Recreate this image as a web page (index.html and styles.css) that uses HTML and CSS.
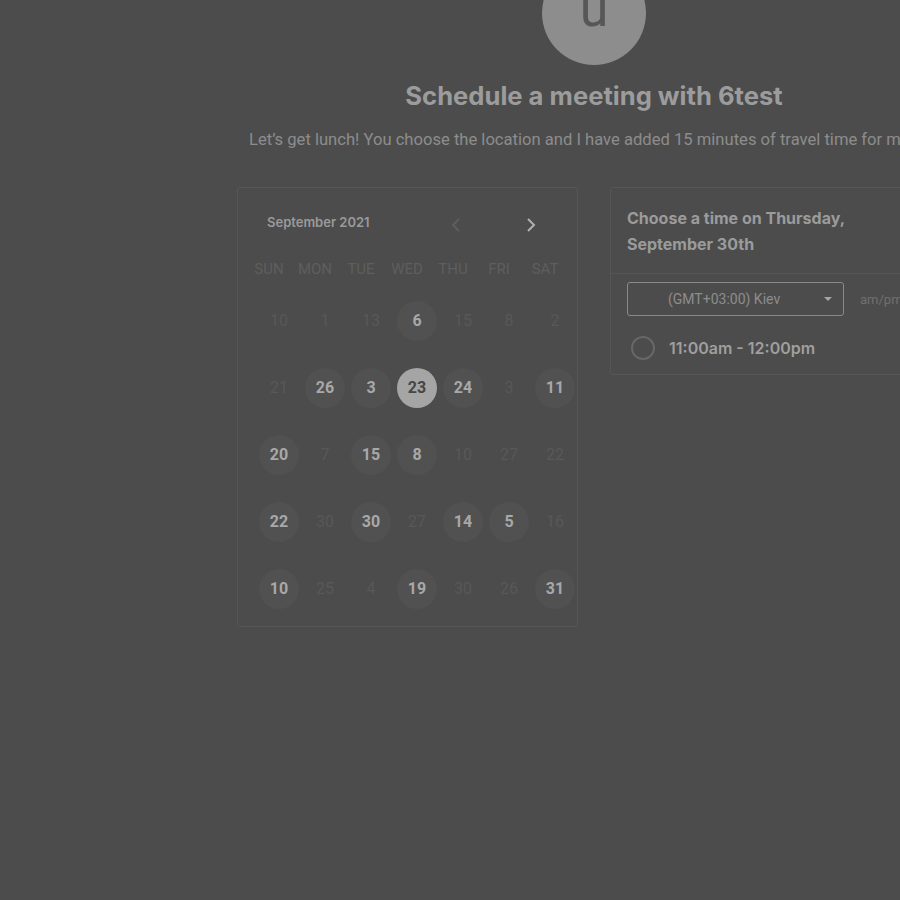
FILE: index.html
```html
<!DOCTYPE html>
<html>
<head>
<meta charset="utf-8">
<link rel="stylesheet" href="styles.css">
</head>
<body>
<div class="page">
  <div class="avatar">u</div>
  <h1 class="title">Schedule a meeting with 6test</h1>
  <p class="subtitle">Let’s get lunch! You choose the location and I have added 15 minutes of travel time for me.</p>
  <div class="cards">
    <section class="card calendar">
      <div class="cal-head">
        <span class="month">September 2021</span>
        <div class="nav">
          <svg class="chev prev" width="10" height="16" viewBox="0 0 10 16"><path d="M8 2 L2 8 L8 14" fill="none" stroke="currentColor" stroke-width="2"/></svg>
          <svg class="chev next" width="10" height="16" viewBox="0 0 10 16"><path d="M2 2 L8 8 L2 14" fill="none" stroke="currentColor" stroke-width="2"/></svg>
        </div>
      </div>
      <div class="weekdays">
        <span>SUN</span><span>MON</span><span>TUE</span><span>WED</span><span>THU</span><span>FRI</span><span>SAT</span>
      </div>
      <div class="days">
        <span class="d">10</span><span class="d">1</span><span class="d">13</span><span class="d on">6</span><span class="d">15</span><span class="d">8</span><span class="d">2</span>
        <span class="d">21</span><span class="d on">26</span><span class="d on">3</span><span class="d sel">23</span><span class="d on">24</span><span class="d">3</span><span class="d on">11</span>
        <span class="d on">20</span><span class="d">7</span><span class="d on">15</span><span class="d on">8</span><span class="d">10</span><span class="d">27</span><span class="d">22</span>
        <span class="d on">22</span><span class="d">30</span><span class="d on">30</span><span class="d">27</span><span class="d on">14</span><span class="d on">5</span><span class="d">16</span>
        <span class="d on">10</span><span class="d">25</span><span class="d">4</span><span class="d on">19</span><span class="d">30</span><span class="d">26</span><span class="d on">31</span>
      </div>
    </section>
    <section class="card times">
      <div class="times-head">Choose a time on Thursday, September 30th</div>
      <div class="times-body">
        <div class="controls">
          <div class="select">
            <span class="select-text">(GMT+03:00) Kiev</span>
            <svg class="caret" width="8" height="4" viewBox="0 0 8 4"><path d="M0 0 H8 L4 4 Z" fill="currentColor"/></svg>
          </div>
          <span class="ampm">am/pm</span>
        </div>
        <label class="slot">
          <span class="radio"></span>
          <span class="slot-text">11:00am - 12:00pm</span>
        </label>
      </div>
    </section>
  </div>
</div>
</body>
</html>
```
FILE: styles.css
```css
html, body {
  margin: 0;
  padding: 0;
  background: #4c4c4c;
  overflow: hidden;
  height: 900px;
}
.page {
  width: 1188px;
  display: flex;
  flex-direction: column;
  align-items: center;
  font-family: Roboto, "Liberation Sans", sans-serif;
}
.avatar {
  width: 104px;
  height: 104px;
  margin-top: -39px;
  border-radius: 50%;
  background: #8d8d8d;
  color: #575757;
  font-family: Roboto, sans-serif;
  font-size: 52px;
  line-height: 96px;
  text-align: center;
}
.title {
  margin: 16px 0 0;
  font-family: Inter, sans-serif;
  font-weight: 700;
  font-size: 25.6px;
  line-height: 30px;
  color: #9c9c9c;
}
.subtitle {
  align-self: flex-start;
  margin: 19px 0 0 249px;
  font-size: 16.6px;
  line-height: 20px;
  color: #8c8c8c;
  white-space: nowrap;
}
.cards {
  display: flex;
  gap: 32px;
  margin-top: 37px;
  align-items: flex-start;
}
.card {
  width: 341px;
  box-sizing: border-box;
  border: 1px solid #565656;
  border-radius: 3px;
}
.calendar {
  height: 440px;
  padding: 0 0 0 8px;
}
.cal-head {
  display: flex;
  align-items: center;
  height: 48px;
  padding: 23px 0 0 21px;
  box-sizing: border-box;
}
.month {
  font-family: Inter, sans-serif;
  font-weight: 600;
  font-size: 13px;
  color: #9a9a9a;
  padding-bottom: 4px;
}
.nav {
  display: flex;
  gap: 65px;
  margin-left: 81px;
  padding-top: 2px;
}
.chev.prev { color: #5e5e5e; }
.chev.next { color: #b0b0b0; }
.weekdays {
  display: grid;
  grid-template-columns: repeat(7, 46px);
  height: 40px;
  align-items: center;
  font-size: 15px;
  color: #5e5e5e;
  text-align: center;
  margin-top: 13px;
}
.days {
  display: grid;
  grid-template-columns: repeat(7, 46px);
  grid-auto-rows: 67px;
  padding-left: 10px;
  margin-top: -2px;
  align-items: center;
  justify-items: center;
}
.d {
  width: 40px;
  height: 40px;
  border-radius: 50%;
  display: flex;
  align-items: center;
  justify-content: center;
  font-size: 16px;
  color: #585858;
}
.d.on {
  background: #515151;
  color: #a8a8a8;
  font-weight: 700;
}
.d.sel {
  background: #a5a5a5;
  color: #464646;
  font-weight: 700;
}
.times {
  height: 188px;
}
.times-head {
  padding: 17px 16px 16px;
  font-family: Inter, sans-serif;
  font-weight: 700;
  font-size: 16px;
  line-height: 26px;
  color: #9b9b9b;
  border-bottom: 1px solid #555555;
  width: 260px;
}
.times-body {
  padding: 8px 0 0 16px;
}
.controls {
  display: flex;
  align-items: center;
  gap: 16px;
}
.select {
  width: 217px;
  height: 34px;
  box-sizing: border-box;
  border: 1px solid #8a8a8a;
  border-radius: 3px;
  display: flex;
  align-items: center;
  padding: 0 11px 0 40px;
}
.select-text {
  flex: 1;
  font-size: 14px;
  color: #8d8d8d;
}
.caret { color: #a5a5a5; }
.ampm {
  font-size: 13px;
  color: #6f6f6f;
}
.slot {
  display: flex;
  align-items: center;
  margin-top: 20px;
  padding-left: 4px;
}
.radio {
  width: 20px;
  height: 20px;
  border: 2px solid #676767;
  border-radius: 50%;
}
.slot-text {
  margin-left: 14px;
  font-family: Inter, sans-serif;
  font-weight: 600;
  font-size: 16px;
  color: #9f9f9f;
}
```
